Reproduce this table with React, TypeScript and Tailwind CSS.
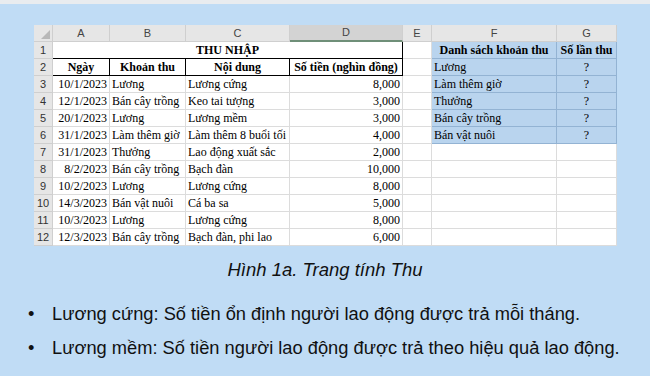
import React from 'react';

const data = [
    ['10/1/2023', 'Lương', 'Lương cứng', '8,000'],
    ['12/1/2023', 'Bán cây trồng', 'Keo tai tượng', '3,000'],
    ['20/1/2023', 'Lương', 'Lương mềm', '3,000'],
    ['31/1/2023', 'Làm thêm giờ', 'Làm thêm 8 buổi tối', '4,000'],
    ['31/1/2023', 'Thưởng', 'Lao động xuất sắc', '2,000'],
    ['8/2/2023', 'Bán cây trồng', 'Bạch đàn', '10,000'],
    ['10/2/2023', 'Lương', 'Lương cứng', '8,000'],
    ['14/3/2023', 'Bán vật nuôi', 'Cá ba sa', '5,000'],
    ['10/3/2023', 'Lương', 'Lương cứng', '8,000'],
    ['12/3/2023', 'Bán cây trồng', 'Bạch đàn, phi lao', '6,000'],
];

const khoanThu = ['Lương', 'Làm thêm giờ', 'Thưởng', 'Bán cây trồng', 'Bán vật nuôi'];

const cols = 'grid grid-cols-[19px_57px_76px_104px_113px_29px_125px_60px]';
const sans = "font-['Liberation_Sans',Arial,sans-serif]";
const serif = "font-['Liberation_Serif','Times_New_Roman',serif]";

const RowNum: React.FC<{ n: number }> = ({ n }) => (
    <div className={`${sans} bg-[#e6e6e6] border-r border-b border-[#cfcfcf] text-[11px] text-[#333] flex items-center justify-center`}>
        {n}
    </div>
);

const Blue: React.FC<{ children?: React.ReactNode; className?: string }> = ({ children, className = '' }) => (
    <div className={`bg-[#b9d4ee] border-r border-b border-[#93b3d3] flex items-center px-[2px] whitespace-nowrap ${className}`}>{children}</div>
);

const Plain: React.FC<{ children?: React.ReactNode; className?: string }> = ({ children, className = '' }) => (
    <div className={`bg-white border-r border-b border-[#dcdcdc] flex items-center px-[2px] whitespace-nowrap ${className}`}>{children}</div>
);

export default function App() {
    return (
        <div className="w-[650px] h-[376px] bg-[#c0dcf5] overflow-hidden">
            <div className="h-[4px] bg-[#e9ecef]" />
            <div className="pl-[34px] pt-[21px]">
                <div className={`w-[583px] text-[12px] leading-none text-black ${serif}`}>
                    {/* column letters */}
                    <div className={`${cols} h-[17px] ${sans} text-[11px] text-[#444]`}>
                        <div className="bg-[#e6e6e6] border-r border-b border-[#cfcfcf] flex items-end justify-end p-[2px]">
                            <svg width="9" height="9" viewBox="0 0 9 9"><polygon points="9,0 9,9 0,9" fill="#b8b8b8" /></svg>
                        </div>
                        {['A', 'B', 'C'].map((c) => (
                            <div key={c} className="bg-[#e6e6e6] border-r border-b border-[#cfcfcf] flex items-center justify-center">{c}</div>
                        ))}
                        <div className="bg-[#d3d3d3] border-r border-[#cfcfcf] border-b-2 border-b-[#6f8f78] flex items-center justify-center">D</div>
                        {['E', 'F', 'G'].map((c) => (
                            <div key={c} className="bg-[#e6e6e6] border-r border-b border-[#cfcfcf] flex items-center justify-center">{c}</div>
                        ))}
                    </div>

                    {/* row 1 */}
                    <div className={`${cols} h-[17px]`}>
                        <RowNum n={1} />
                        <div className="col-span-4 bg-white border-r border-b border-black flex items-center justify-center font-bold">THU NHẬP</div>
                        <Plain />
                        <Blue className="justify-center font-bold">Danh sách khoản thu</Blue>
                        <Blue className="justify-center font-bold">Số lần thu</Blue>
                    </div>

                    {/* row 2 */}
                    <div className={`${cols} h-[17px]`}>
                        <RowNum n={2} />
                        {['Ngày', 'Khoản thu', 'Nội dung', 'Số tiền (nghìn đồng)'].map((h) => (
                            <div key={h} className="bg-white border-r border-b border-black flex items-center justify-center font-bold whitespace-nowrap">{h}</div>
                        ))}
                        <Plain />
                        <Blue>{khoanThu[0]}</Blue>
                        <Blue className="justify-center">?</Blue>
                    </div>

                    {data.map((r, i) => {
                        const n = i + 3;
                        const k = khoanThu[i + 1];
                        return (
                            <div key={n} className={`${cols} h-[17px]`}>
                                <RowNum n={n} />
                                <Plain className="justify-end">{r[0]}</Plain>
                                <Plain>{r[1]}</Plain>
                                <Plain>{r[2]}</Plain>
                                <Plain className="justify-end">{r[3]}</Plain>
                                <Plain />
                                {k ? <Blue>{k}</Blue> : <Plain />}
                                {k ? <Blue className="justify-center">?</Blue> : <Plain />}
                            </div>
                        );
                    })}
                </div>
            </div>

            <p className={`${sans} italic text-[18.5px] leading-[22px] text-center mt-[13px] text-[#111]`}>Hình 1a. Trang tính Thu</p>

            <ul className={`${sans} text-[18.3px] leading-[21px] text-[#111] mt-[22px] pl-[28px] space-y-[13px]`}>
                <li className="flex"><span className="w-[24px]">•</span><span>Lương cứng: Số tiền ổn định người lao động được trả mỗi tháng.</span></li>
                <li className="flex"><span className="w-[24px]">•</span><span>Lương mềm: Số tiền người lao động được trả theo hiệu quả lao động.</span></li>
            </ul>
        </div>
    );
}
